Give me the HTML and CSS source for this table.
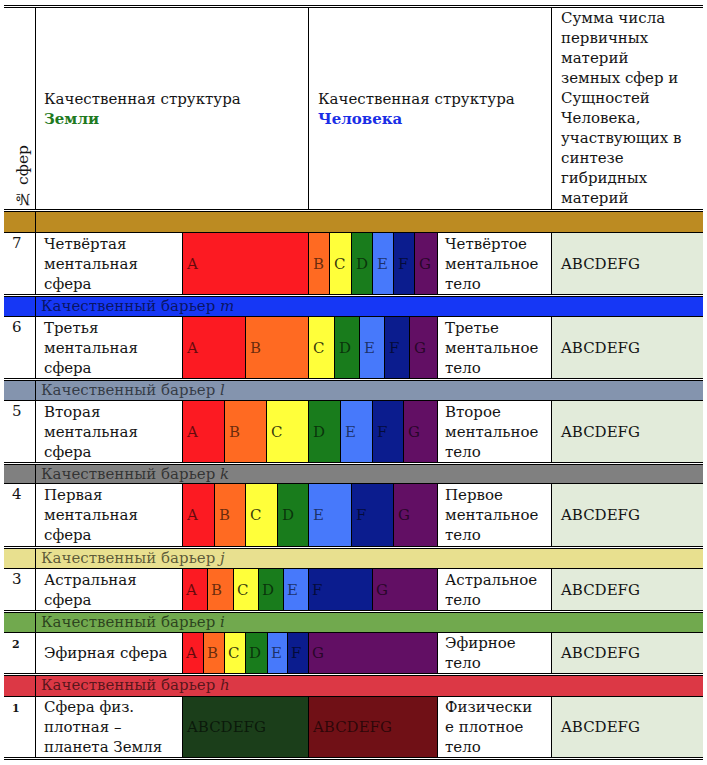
FILE: index.html
```html
<!DOCTYPE html>
<html lang="ru">
<head>
<meta charset="utf-8">
<title>Качественная структура</title>
<link rel="stylesheet" href="styles.css">
</head>
<body>
<div class="table">
  <div class="row head">
    <div class="c h-num"><span class="vert">№ сфер</span></div>
    <div class="c h-mid">Качественная структура<br><b class="earth">Земли</b></div>
    <div class="c h-mid">Качественная структура<br><b class="man">Человека</b></div>
    <div class="c h-sum">Сумма числа<br>первичных<br>материй<br>земных сфер и<br>Сущностей<br>Человека,<br>участвующих в<br>синтезе<br>гибридных<br>материй</div>
  </div>

  <div class="row barrier bar-gold"><div class="c"></div><div class="c"></div></div>

  <div class="row data r7">
    <div class="c num">7</div>
    <div class="c name">Четвёртая<br>ментальная<br>сфера</div>
    <div class="c bars g7">
      <div class="cA">A</div><div class="cB">B</div><div class="cC">C</div><div class="cD">D</div><div class="cE">E</div><div class="cF">F</div><div class="cG">G</div>
    </div>
    <div class="c label">Четвёртое<br>ментальное<br>тело</div>
    <div class="c sum">ABCDEFG</div>
  </div>

  <div class="row barrier bar-m"><div class="c"></div><div class="c btext">Качественный барьер <i>m</i></div></div>

  <div class="row data r6">
    <div class="c num">6</div>
    <div class="c name">Третья<br>ментальная<br>сфера</div>
    <div class="c bars g6">
      <div class="cA">A</div><div class="cB">B</div><div class="cC">C</div><div class="cD">D</div><div class="cE">E</div><div class="cF">F</div><div class="cG">G</div>
    </div>
    <div class="c label">Третье<br>ментальное<br>тело</div>
    <div class="c sum">ABCDEFG</div>
  </div>

  <div class="row barrier bar-l"><div class="c"></div><div class="c btext">Качественный барьер <i>l</i></div></div>

  <div class="row data r5">
    <div class="c num">5</div>
    <div class="c name">Вторая<br>ментальная<br>сфера</div>
    <div class="c bars g5">
      <div class="cA">A</div><div class="cB">B</div><div class="cC">C</div><div class="cD">D</div><div class="cE">E</div><div class="cF">F</div><div class="cG">G</div>
    </div>
    <div class="c label">Второе<br>ментальное<br>тело</div>
    <div class="c sum">ABCDEFG</div>
  </div>

  <div class="row barrier bar-k"><div class="c"></div><div class="c btext">Качественный барьер <i>k</i></div></div>

  <div class="row data r4">
    <div class="c num">4</div>
    <div class="c name">Первая<br>ментальная<br>сфера</div>
    <div class="c bars g4">
      <div class="cA">A</div><div class="cB">B</div><div class="cC">C</div><div class="cD">D</div><div class="cE">E</div><div class="cF">F</div><div class="cG">G</div>
    </div>
    <div class="c label">Первое<br>ментальное<br>тело</div>
    <div class="c sum">ABCDEFG</div>
  </div>

  <div class="row barrier bar-j"><div class="c"></div><div class="c btext">Качественный барьер <i>j</i></div></div>

  <div class="row data r3">
    <div class="c num">3</div>
    <div class="c name">Астральная<br>сфера</div>
    <div class="c bars g3">
      <div class="cA">A</div><div class="cB">B</div><div class="cC">C</div><div class="cD">D</div><div class="cE">E</div><div class="cF">F</div><div class="cG">G</div>
    </div>
    <div class="c label">Астральное<br>тело</div>
    <div class="c sum">ABCDEFG</div>
  </div>

  <div class="row barrier bar-i"><div class="c"></div><div class="c btext">Качественный барьер <i>i</i></div></div>

  <div class="row data r2">
    <div class="c num"><span class="small">2</span></div>
    <div class="c name">Эфирная сфера</div>
    <div class="c bars g2">
      <div class="cA">A</div><div class="cB">B</div><div class="cC">C</div><div class="cD">D</div><div class="cE">E</div><div class="cF">F</div><div class="cG">G</div>
    </div>
    <div class="c label">Эфирное<br>тело</div>
    <div class="c sum">ABCDEFG</div>
  </div>

  <div class="row barrier bar-h"><div class="c"></div><div class="c btext">Качественный барьер <i>h</i></div></div>

  <div class="row data r1">
    <div class="c num"><span class="small">1</span></div>
    <div class="c name">Сфера физ.<br>плотная –<br>планета Земля</div>
    <div class="c bars g1">
      <div class="cDG">ABCDEFG</div><div class="cDR">ABCDEFG</div>
    </div>
    <div class="c label">Физически<br>е плотное<br>тело</div>
    <div class="c sum">ABCDEFG</div>
  </div>
</div>
</body>
</html>
```
FILE: styles.css
```css
html, body {
  margin: 0;
  padding: 0;
  background: #fff;
}

body {
  font-family: "DejaVu Serif", "Liberation Serif", serif;
  font-size: 15px;
  line-height: 20px;
  color: #141414;
}

.table {
  margin: 5px 0 0 4px;
  width: 699px;
  border-top: 3px double #000;
}

.row {
  display: grid;
  box-sizing: border-box;
  border-bottom: 1px solid #000;
}

.c {
  box-sizing: border-box;
  min-width: 0;
}

.row > .c + .c {
  border-left: 1px solid #000;
}

/* header */
.head {
  grid-template-columns: 31px 273px 243px 152px;
  height: 204px;
  border-bottom: 3px double #000;
}

.h-num {
  display: flex;
  align-items: flex-end;
  justify-content: flex-end;
  padding: 0 2px 1px 0;
}

.vert {
  writing-mode: vertical-rl;
  transform: rotate(180deg);
  white-space: nowrap;
  font-size: 15.5px;
}

.h-mid {
  display: flex;
  flex-direction: column;
  justify-content: center;
  padding: 0 8px 0 8px;
}

.h-mid + .h-mid {
  padding-left: 9px;
}

.earth {
  color: #1f7a1f;
}

.man {
  color: #1a2ee6;
}

.h-sum {
  padding: 0 4px 0 9px;
  white-space: nowrap;
}

/* data rows */
.data {
  grid-template-columns: 31px 147px 255px 114px 152px;
  border-bottom: 3px double #000;
}

.r7, .r6, .r5 { height: 64px; }
.r4 { height: 65px; }
.r3 { height: 44px; }
.r2 { height: 43px; }
.r1 { height: 63px; }

.num {
  padding: 0 0 0 8px;
}

.small {
  font-size: 11px;
  font-weight: bold;
}

.name,
.label {
  display: flex;
  flex-direction: column;
  justify-content: center;
  white-space: nowrap;
}

.name {
  padding-left: 8px;
}

.label {
  padding-left: 7px;
}

.sum {
  background: #e2ebda;
  display: flex;
  align-items: center;
  padding-left: 9px;
}

/* colour bars */
.bars {
  display: grid;
}

.bars > div {
  display: flex;
  align-items: center;
  padding-left: 4px;
  color: rgba(0, 0, 0, 0.6);
  overflow: hidden;
  white-space: nowrap;
}

.bars > div + div {
  border-left: 1px solid #000;
}

.g7 { grid-template-columns: 125px 21px 22px 21px 21px 21px 23px; }
.g6 { grid-template-columns: 62px 63px 26px 25px 25px 25px 28px; }
.g5 { grid-template-columns: 41px 42px 42px 32px 32px 31px 34px; }
.g4 { grid-template-columns: 31px 31px 32px 31px 43px 42px 44px; }
.g3 { grid-template-columns: 24px 26px 25px 25px 25px 64px 65px; }
.g2 { grid-template-columns: 20px 21px 21px 22px 20px 21px 129px; }
.g1 { grid-template-columns: 125px 129px; }

.g2 > div,
.g3 > div {
  padding-left: 3px;
}

.cA { background: #fc1a22; }
.cB { background: #ff6a22; }
.cC { background: #ffff3a; color: rgba(0, 0, 0, 0.8) !important; }
.cD { background: #197c1c; }
.cE { background: #4779fb; }
.cF { background: #0b1c8e; }
.cG { background: #620f64; }
.cDG { background: #1b3e1a; }
.cDR { background: #701016; }

/* barriers */
.barrier {
  grid-template-columns: 31px 668px;
}

.btext {
  padding-left: 5px;
  color: rgba(0, 0, 0, 0.62);
  white-space: nowrap;
  line-height: 19px;
}

.bar-gold { background: #bc8b22; height: 21px; }
.bar-m { background: #1637f5; height: 20px; }
.bar-l { background: #8494ae; height: 20px; }
.bar-k { background: #808080; height: 19px; }
.bar-j { background: #e8e08f; height: 20px; }
.bar-i { background: #71a94e; height: 20px; }
.bar-h { background: #dc3845; height: 21px; }
```
